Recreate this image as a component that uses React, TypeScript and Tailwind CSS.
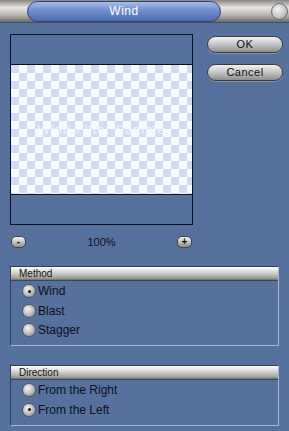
import React from "react";

const metal =
  "bg-[linear-gradient(to_bottom,#f2f2f2_0%,#c9c9c9_45%,#8e8e8e_100%)]";

const Radio = ({ on }: { on?: boolean }) => (
  <span className="relative flex h-[14px] w-[14px] shrink-0 items-center justify-center rounded-full border border-[#4f5864] bg-[radial-gradient(circle_at_40%_35%,#f0f0f0_0%,#c6c6c6_45%,#7e7e7e_100%)]">
    {on && <span className="h-[3px] w-[3px] rounded-full bg-[#111]" />}
  </span>
);

const Option = ({ label, on }: { label: string; on?: boolean }) => (
  <div className="flex h-[19.5px] items-center gap-[2px] pl-[11px]">
    <Radio on={on} />
    <span className="text-[12px] text-[#0b1020]">{label}</span>
  </div>
);

const Group = ({
  title,
  items,
  height,
}: {
  title: string;
  items: { label: string; on?: boolean }[];
  height: string;
}) => (
  <div
    className={`mx-[10px] flex flex-col border border-t-[#2e3e5c] border-l-[#2e3e5c] border-r-[#a9b8d3] border-b-[#a9b8d3] ${height}`}
  >
    <div className="h-[14px] border-b border-[#3b4657] bg-[linear-gradient(to_bottom,#ffffff_0%,#d6d6d6_40%,#a09f9c_85%,#6f6d6a_100%)] pl-[8px] text-[10px] leading-[14px] text-[#111]">
      {title}
    </div>
    <div className="flex flex-col pt-[1px]">
      {items.map((it) => (
        <Option key={it.label} label={it.label} on={it.on} />
      ))}
    </div>
  </div>
);

const Btn = ({ label }: { label: string }) => (
  <div
    className={`flex h-[17px] w-[76px] items-center justify-center rounded-full border border-[#3a3a3a] ${metal} text-[11px] tracking-[0.5px] text-[#111] shadow-[0_1px_0_#7f95bd]`}
  >
    {label}
  </div>
);

const SmallBtn = ({ label }: { label: string }) => (
  <div
    className={`flex h-[12px] w-[15px] items-center justify-center rounded-[5px] border border-[#444] ${metal} text-[10px] font-bold leading-none text-[#111]`}
  >
    {label}
  </div>
);

export default function App() {
  return (
    <div className="flex h-[431px] w-[289px] flex-col overflow-hidden bg-[#56719c] font-['Liberation_Sans',Arial,sans-serif]">
      <div className="flex h-[23px] shrink-0 items-center bg-[linear-gradient(to_bottom,#8a8580_0%,#e8e6e4_35%,#b5b2ae_70%,#6e6a66_100%)] border-b border-[#3f4e6b]">
        <div className="ml-[27px] flex h-[21px] w-[194px] items-center justify-center rounded-full border border-[#2d4470] bg-[linear-gradient(to_bottom,#a9bde4_0%,#7391cf_40%,#4d6cac_100%)] text-[12px] tracking-[0.5px] text-white">
          Wind
        </div>
        <div className="ml-auto mr-[1px] h-[17px] w-[17px] rounded-full border border-[#6a6a6a] bg-[radial-gradient(circle_at_40%_35%,#f4f4f4_0%,#c8c8c8_55%,#8c8c8c_100%)]" />
      </div>

      <div className="flex px-[10px] pt-[11px]">
        <div className="flex h-[191px] w-[183px] shrink-0 flex-col border border-[#0b0f26] bg-[#56719c]">
          <div className="h-[29px]" />
          <div className="relative flex h-[131px] items-center justify-center border-y border-[#0b0f26] [background-image:repeating-conic-gradient(#f8fbff_0_25%,#d2ddf4_0_50%)] [background-size:16px_16px]">
            <span className="text-[13px] tracking-[1px] text-white/70">
              Wind Filter Sample
            </span>
          </div>
          <div className="flex-1" />
        </div>
        <div className="ml-[14px] flex shrink-0 flex-col gap-[11px] pt-[2px]">
          <Btn label="OK" />
          <Btn label="Cancel" />
        </div>
      </div>

      <div className="flex w-[203px] items-center px-[11px] pt-[9px]">
        <SmallBtn label="-" />
        <span className="flex-1 text-center text-[11px] text-[#0b1020]">100%</span>
        <SmallBtn label="+" />
      </div>

      <div className="pt-[15px]">
        <Group
          title="Method"
          height="h-[80px]"
          items={[{ label: "Wind", on: true }, { label: "Blast" }, { label: "Stagger" }]}
        />
      </div>

      <div className="pt-[19px]">
        <Group
          title="Direction"
          height="h-[61px]"
          items={[{ label: "From the Right" }, { label: "From the Left", on: true }]}
        />
      </div>
    </div>
  );
}
